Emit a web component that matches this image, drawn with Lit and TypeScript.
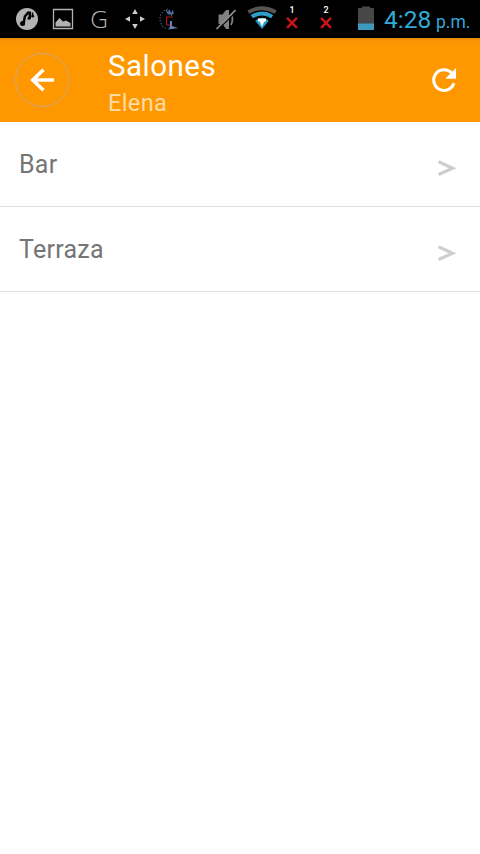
import { LitElement, html, css } from "lit";
import { customElement, property } from "lit/decorators.js";

@customElement("status-bar")
class StatusBar extends LitElement {
  static styles = css`
    :host { display: flex; height: 38px; background: #000; box-sizing: border-box; padding: 0 10px 0 15px; font-family: Roboto, sans-serif; color: #33a9d6; }
    svg { display: block; height: 38px; flex: none; }
    .left, .right { display: flex; }
    .right { margin-left: auto; }
    .left { gap: 12px; }
    .g { width: 24px; text-align: center; font: 300 24.5px/37px "Open Sans", sans-serif; color: #b8b8b8; }
    .sim { width: 34px; display: flex; flex-direction: column; align-items: center; }
    .sim span { font-size: 9px; line-height: 11px; margin-top: 5px; font-weight: 500; color: #fff; }
    .sim svg { width: 14px; height: 14px; }
    .clock { width: 52px; font-size: 24.5px; line-height: 39px; white-space: nowrap; }
    .half { width: 34px; font-size: 17.5px; line-height: 44px; white-space: nowrap; }
    .battery { margin: 0 10px 0 15px; }
    .mute { margin-right: 9px; }
    .wifi { margin-right: -2px; }
  `;
  sim(n: number) {
    return html`<div class="sim"><span>${n}</span>
      <svg viewBox="0 0 14 14"><path d="M2 1.8L12 11.8M12 1.8L2 11.8" stroke="#c91515" stroke-width="2.5"/></svg></div>`;
  }
  render() {
    return html`
      <div class="left">
        <svg width="24" viewBox="0 0 24 38">
          <circle cx="12" cy="19" r="11" fill="#b2b2b2"/>
          <path d="M8.6 24L9.8 16.5L13 12.8H14.8V18.5" fill="none" stroke="#000" stroke-width="2.4"/>
          <path d="M17.5 12.5V16" stroke="#000" stroke-width="1.5"/>
          <circle cx="7.6" cy="23.6" r="2.5"/><circle cx="14" cy="18.3" r="1.5"/><circle cx="17.7" cy="16.2" r="1.4"/>
        </svg>
        <svg width="24" viewBox="0 0 24 38">
          <path d="M2.5 9.5H21.5V28.5H2.5Z" fill="none" stroke="#b2b2b2" stroke-width="1.3"/>
          <path d="M4.5 26.5V22.5L8.5 18L12 21.5L15 20.5L19.5 23V26.5Z" fill="#b2b2b2"/>
        </svg>
        <div class="g">G</div>
        <svg width="24" viewBox="0 0 24 38">
          <path d="M12 9L14.8 14H9.2ZM12 29L9.2 24H14.8ZM2 19L7 16.2V21.8ZM22 19L17 21.8V16.2Z" fill="#ccc"/>
        </svg>
        <svg width="24" viewBox="0 0 24 38">
          <path d="M9 9C-1 11 -2 25 8 29" fill="none" stroke="#435b83" stroke-width="1.1" stroke-dasharray="1.5 1.5"/>
          <path d="M14 17H7.5V25H13" fill="none" stroke="#a51820" stroke-width="1.1"/>
          <path d="M7 10L10 14L10 10L12.5 15L14 10.5M8 13L15 13" fill="none" stroke="#547ba8" stroke-width="1.1"/>
          <path d="M11 21H13V26L19 28L9 29.5L11 27Z" fill="#6483bb"/>
        </svg>
      </div>
      <div class="right">
        <svg class="mute" width="24" viewBox="0 0 24 38">
          <path d="M4.5 14.5H8.5L12 10H15V29H12L8.5 24H4.5Z" fill="#808080"/>
          <path d="M17 14Q20 19 17 25" fill="none" stroke="#808080" stroke-width="1.8"/>
          <path d="M4 29.6L22 11.8" stroke="#000" stroke-width="1.2"/><path d="M2.5 29L21.5 10.2" stroke="#8c8c8c" stroke-width="1.7"/>
        </svg>
        <svg class="wifi" width="30" viewBox="0 0 30 38">
          <path d="M1.3 12.1Q15 4.3 28.7 12.1" fill="none" stroke="#555" stroke-width="3.9"/>
          <path d="M4.8 16.6Q15 10.4 25.2 16.6" fill="none" stroke="#2f9dc9" stroke-width="4"/>
          <path d="M8.2 20.7Q15 15 21.8 20.7L15 29Z" fill="#2d9bc9"/>
          <path d="M11 18.5H19V21L17 22L15 26.5L13 22L11 21Z" fill="#fff"/>
        </svg>
        ${this.sim(1)}${this.sim(2)}
        <svg class="battery" width="16" viewBox="0 0 16 38">
          <path d="M0 8H4V6.5H12V8H16V30H0Z" fill="#474747"/><path d="M0 23.5H16V30H0Z" fill="#3d9abe"/>
        </svg>
        <div class="clock">4:28</div><div class="half">p.m.</div>
      </div>`;
  }
}

@customElement("room-row")
class RoomRow extends LitElement {
  @property() label = "";
  static styles = css`
    :host { display: flex; height: 85px; box-sizing: border-box; border-bottom: 1px solid #ddd; padding: 0 24px 0 19px; justify-content: space-between; align-items: center; font-family: Roboto, sans-serif; color: #757575; }
    .label { font-size: 25px; line-height: 30px; letter-spacing: .25px; padding-top: 2px; }
    svg { display: block; margin-top: 8px; }
  `;
  render() {
    return html`<span class="label">${this.label}</span>
      <svg width="18" height="18" viewBox="0 0 18 18"><path d="M.5 2.8L14.6 9.2L.5 15.6" fill="none" stroke="#cecece" stroke-width="3.2"/></svg>`;
  }
}

@customElement("app-root")
class AppRoot extends LitElement {
  static styles = css`
    :host { display: block; height: 854px; background: #fff; font-family: Roboto, sans-serif; overflow: hidden; }
    header { display: flex; height: 84px; box-sizing: border-box; padding: 0 21px 0 15px; background: linear-gradient(#e58900 0, #fa9503 3px, #ff9800 9px); color: #fff; align-items: center; }
    .back { width: 55px; height: 55px; flex: none; }
    .titles { margin-left: 38px; padding-top: 5px; flex: 1; }
    .title { font-size: 29.5px; line-height: 36px; letter-spacing: .5px; }
    .subtitle { font-size: 23.5px; line-height: 30px; letter-spacing: .4px; margin-top: 4px; color: #ffdba3; }
    .refresh { width: 30px; height: 30px; }
  `;
  render() {
    return html`
      <status-bar></status-bar>
      <header>
        <svg class="back" viewBox="0 0 55 55" fill="none">
          <circle cx="27.2" cy="27" r="26.6" stroke="#c9aa80"/>
          <path d="M39 27H18M28.5 16.8L17.8 27L28.5 37.2" stroke="#fff" stroke-width="3.6"/>
        </svg>
        <div class="titles"><div class="title">Salones</div><div class="subtitle">Elena</div></div>
        <svg class="refresh" viewBox="0 0 30 30">
          <path d="M25 18.3A10.4 10.4 0 1 1 22.6 7.8" fill="none" stroke="#fff" stroke-width="3"/>
          <path d="M27 3V13.8H16.2Z" fill="#fff"/>
        </svg>
      </header>
      <room-row label="Bar"></room-row>
      <room-row label="Terraza"></room-row>`;
  }
}
